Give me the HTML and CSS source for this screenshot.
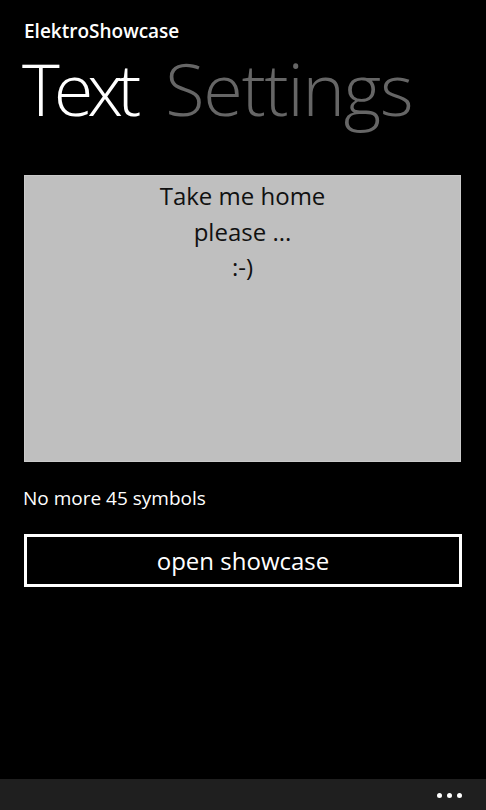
FILE: index.html
```html
<!DOCTYPE html>
<html>
<head>
<meta charset="utf-8">
<link rel="stylesheet" href="styles.css">
</head>
<body>
<div class="page">
  <div class="app-title">ElektroShowcase</div>
  <div class="pivot">
    <span class="pivot-item active">Text</span>
    <span class="pivot-item">Settings</span>
  </div>
  <div class="content">
    <div class="textbox">
      <div class="line">Take me home</div>
      <div class="line">please ...</div>
      <div class="line">:-)</div>
    </div>
    <div class="hint">No more 45 symbols</div>
    <div class="button">open showcase</div>
  </div>
  <div class="appbar">
    <div class="dots"><span class="dot"></span><span class="dot"></span><span class="dot"></span></div>
  </div>
</div>
</body>
</html>
```
FILE: styles.css
```css
html, body {
  margin: 0;
  padding: 0;
  background: #000;
}
.page {
  width: 486px;
  height: 810px;
  display: flex;
  flex-direction: column;
  font-family: "Open Sans", "Noto Sans", sans-serif;
  color: #fff;
}
.app-title {
  font-size: 19px;
  font-weight: 600;
  line-height: 24px;
  padding: 19px 0 0 24px;
}
.pivot {
  display: flex;
  gap: 30px;
  padding-left: 22px;
  font-size: 72px;
  font-weight: 300;
  line-height: 72px;
  margin-top: 9px;
  white-space: nowrap;
}
.pivot-item {
  color: #666;
  letter-spacing: -1.2px;
}
.pivot-item.active {
  color: #fff;
  letter-spacing: -6px;
}
.content {
  flex: 1;
  display: flex;
  flex-direction: column;
  padding: 51px 24px 0 24px;
}
.textbox {
  height: 283px;
  background: #bfbfbf;
  border: 1px solid #cacaca;
  color: #111;
  font-size: 24px;
  line-height: 35.5px;
  text-align: center;
  padding-top: 2px;
  width: 435px;
}
.hint {
  font-size: 19px;
  line-height: 24px;
  margin-top: 24px;
  margin-left: -1px;
}
.button {
  margin-top: 24px;
  height: 47px;
  width: 432px;
  border: 3px solid #fff;
  display: flex;
  align-items: center;
  justify-content: center;
  font-size: 24px;
  box-sizing: content-box;
}
.appbar {
  height: 31px;
  background: #1f1f1f;
  display: flex;
  justify-content: flex-end;
  align-items: center;
  padding-right: 24px;
}
.dots {
  display: flex;
  gap: 5px;
  margin-bottom: -1px;
}
.dot {
  width: 5px;
  height: 5px;
  border-radius: 50%;
  background: #fff;
}
```
